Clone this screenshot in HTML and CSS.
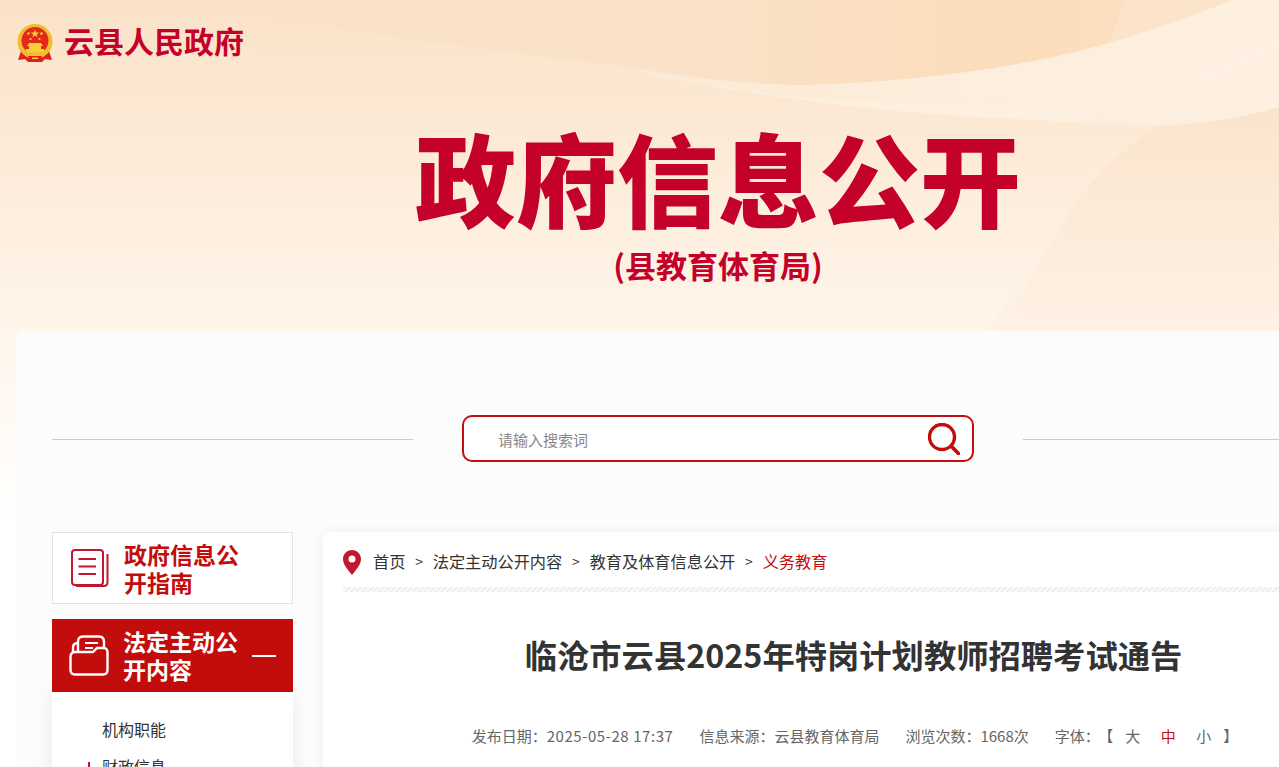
FILE: index.html
```html
<!DOCTYPE html>
<html lang="zh-CN">
<head>
    <meta charset="UTF-8">
    <title>政府信息公开</title>
    <link rel="stylesheet" href="styles.css">
</head>
<body>
    <div class="page">
        <svg class="banner-bg" viewBox="0 0 1436 520" preserveAspectRatio="none">
            <defs>
                <linearGradient id="bg" x1="0" y1="0" x2="0" y2="1">
                    <stop offset="0" stop-color="#fae2c8"/>
                    <stop offset="0.3" stop-color="#fdebd8"/>
                    <stop offset="0.62" stop-color="#fff5ea"/>
                    <stop offset="1" stop-color="#ffffff"/>
                </linearGradient>
                <linearGradient id="swoop" gradientUnits="userSpaceOnUse" x1="190" y1="0" x2="1232" y2="0">
                    <stop offset="0" stop-color="#fae2c8"/>
                    <stop offset="0.45" stop-color="#fae2c8"/>
                    <stop offset="0.78" stop-color="#fbddbb"/>
                    <stop offset="1" stop-color="#fbe0c2"/>
                </linearGradient>
                <linearGradient id="band" gradientUnits="userSpaceOnUse" x1="640" y1="0" x2="1279" y2="0">
                    <stop offset="0" stop-color="#fce9d5"/>
                    <stop offset="0.5" stop-color="#fdeedd"/>
                    <stop offset="1" stop-color="#fdf0e1"/>
                </linearGradient>
                <linearGradient id="facet" gradientUnits="userSpaceOnUse" x1="0" y1="110" x2="0" y2="331">
                    <stop offset="0" stop-color="#fbe4cc"/>
                    <stop offset="1" stop-color="#fef2e5"/>
                </linearGradient>
            </defs>
            <rect width="1436" height="520" fill="url(#bg)"/>
            <path d="M190 0C330 30 480 50 640 68C700 78 750 85 803 85C920 82 1030 66 1109 43C1160 28 1200 13 1232 0Z" fill="url(#swoop)"/>
            <path d="M1109 43L1125 0H1232C1200 13 1160 28 1109 43Z" fill="#fce4cb"/>
            <path d="M640 72C720 90 820 106 925 113C1000 119 1090 124 1154 125C1200 125 1250 116 1279 107L1436 60V0H1232C1200 13 1160 28 1109 43C1030 66 920 82 803 85C750 85 700 78 640 72Z" fill="url(#band)"/>
            <path d="M640 70C760 98 860 104 1000 104C1120 102 1220 70 1279 34V50C1220 88 1110 122 1000 118C860 112 740 92 640 72Z" fill="#fef3e6" fill-opacity="0.35"/>
            <path d="M1154 127L1101 170C1060 220 1020 285 987 331H1436V100L1279 107C1250 116 1200 125 1154 127Z" fill="url(#facet)"/>
            <path d="M1154 127L1101 170C1060 220 1020 285 987 331H1000C1030 280 1060 225 1095 175Z" fill="#fff3e6" fill-opacity="0.6"/>
        </svg>

        <header class="banner">
            <div class="logo">
                <svg class="emblem" viewBox="0 0 36 38">
                    <path d="M4 27L1 36L8 35L11 38H25L28 35L35 36L32 27Z" fill="#d8241c"/>
                    <circle cx="18" cy="17.500" r="17.500" fill="#f2bd2b"/>
                    <circle cx="18" cy="16.500" r="13.500" fill="#e3291c"/>
                    <path d="M18 5.500l1.100 3h3.200l-2.600 1.900 1 3-2.700-1.800-2.700 1.800 1-3-2.600-1.900h3.200z" fill="#f7d038"/>
                    <circle cx="11.500" cy="9.500" r="1.300" fill="#f7d038"/>
                    <circle cx="24.500" cy="9.500" r="1.300" fill="#f7d038"/>
                    <circle cx="13.500" cy="15" r="1.100" fill="#f7d038"/>
                    <circle cx="22.500" cy="15" r="1.100" fill="#f7d038"/>
                    <path d="M12 19h12l2 3h-2v3h3v3H9v-3h3v-3h-2z" fill="#f7d038"/>
                    <path d="M6 28H30L27 32H9Z" fill="#f2bd2b"/>
                    <path d="M11 32H25L23 37H13Z" fill="#d8241c"/>
                    <path d="M15 33.500H21V35H15Z" fill="#f7d038"/>
                </svg>
                <span class="logo-name">云县人民政府</span>
            </div>
            <h1 class="banner-title">政府信息公开</h1>
            <p class="banner-sub">(县教育体育局)</p>
        </header>

        <main class="panel">
            <div class="search-row">
                <span class="search-line"></span>
                <div class="search-box">
                    <span class="search-hint">请输入搜索词</span>
                    <svg class="search-icon" viewBox="0 0 32 32">
                        <circle cx="14" cy="14" r="12.500" fill="none" stroke="#c30d0c" stroke-width="3.400"/>
                        <path d="M23.500 23.500L30.500 30.500" stroke="#c30d0c" stroke-width="3.800" stroke-linecap="round"/>
                    </svg>
                </div>
                <span class="search-line"></span>
            </div>

            <div class="columns">
                <aside class="sidebar">
                    <a class="side-head">
                        <svg class="side-icon" viewBox="0 0 38 38" fill="none" stroke="#c1182e" stroke-width="2">
                            <rect x="1" y="1" width="31" height="35" rx="3"/>
                            <path d="M36.500 5V33C36.500 35.500 35 37 33 37H5"/>
                            <path d="M7.500 10H25M7.500 17.500H25M7.500 25H25"/>
                        </svg>
                        <span>政府信息公开指南</span>
                    </a>
                    <a class="side-head active">
                        <svg class="side-icon" viewBox="0 0 40 41" fill="none" stroke="#fff" stroke-width="2.400">
                            <path d="M9 17V7C9 3 11 1.500 14 1.500H30C33 1.500 35 3 35 7V13"/>
                            <path d="M9 8C5 8 4 10 4 13V17"/>
                            <path d="M1.500 22C1.500 19 3 17 6 17H24L28 13H35C37 13 38.500 15 38.500 17V35C38.500 38 37 39.500 34 39.500H6C3 39.500 1.500 38 1.500 35Z"/>
                            <path d="M16 8H29M16 13H24" stroke-width="2"/>
                        </svg>
                        <span>法定主动公开内容</span>
                        <i class="side-minus"></i>
                    </a>
                    <ul class="side-list">
                        <li>机构职能</li>
                        <li class="open">财政信息</li>
                    </ul>
                </aside>

                <article class="article">
                    <nav class="crumbs">
                        <svg class="pin" viewBox="0 0 18 25">
                            <path fill-rule="evenodd" d="M9 0C4 0 0 4 0 9C0 15 6 21 9 25C12 21 18 15 18 9C18 4 14 0 9 0ZM9 5.500A3.500 3.500 0 1 1 9 12.500A3.500 3.500 0 1 1 9 5.500Z" fill="#c1182e"/>
                        </svg>
                        <a>首页</a><b>&gt;</b>
                        <a>法定主动公开内容</a><b>&gt;</b>
                        <a>教育及体育信息公开</a><b>&gt;</b>
                        <a class="current">义务教育</a>
                    </nav>
                    <h2 class="article-title">临沧市云县2025年特岗计划教师招聘考试通告</h2>
                    <div class="meta">
                        <span>发布日期：<span class="date">2025-05-28 17:37</span></span>
                        <span>信息来源：云县教育体育局</span>
                        <span>浏览次数：1668次</span>
                        <span class="sizes">字体：<em class="open-bracket">【</em><a>大</a><a class="on">中</a><a class="small">小</a><em>】</em></span>
                    </div>
                </article>
            </div>
        </main>
    </div>
</body>
</html>
```

FILE: styles.css
```css
html, body {
    margin: 0;
    height: 100%;
    overflow: hidden;
}
body {
    font-family: "Noto Sans CJK SC", sans-serif;
    background: #fff;
    color: #333;
}
.page {
    position: relative;
    width: 1436px;
}
.banner-bg {
    position: absolute;
    left: 0;
    top: 0;
    width: 1436px;
    height: 520px;
}
.banner {
    position: relative;
    height: 331px;
    text-align: center;
}
.logo {
    display: flex;
    align-items: center;
    gap: 11px;
    padding: 24px 0 0 17px;
    height: 38px;
}
.emblem {
    width: 36px;
    height: 38px;
}
.logo-name {
    position: relative;
    top: -3px;
    font-size: 30px;
    font-weight: 700;
    color: #c4012b;
}
.banner-title {
    margin: 54px 0 0;
    font-size: 101px;
    line-height: 120px;
    font-weight: 900;
    color: #c4012b;
}
.banner-sub {
    margin: 7px 0 0;
    font-size: 31px;
    line-height: 44px;
    font-weight: 700;
    color: #c4012b;
}
.panel {
    position: relative;
    width: 1332px;
    height: 700px;
    margin-left: 16px;
    padding: 84px 36px 0;
    background: #fcfcfc;
    border-radius: 8px 8px 0 0;
}
.search-row {
    display: flex;
    align-items: center;
    justify-content: space-between;
}
.search-line {
    position: relative;
    top: 1px;
    width: 361px;
    height: 1px;
    background: #ccc;
}
.search-box {
    display: flex;
    align-items: center;
    justify-content: space-between;
    box-sizing: border-box;
    width: 512px;
    height: 47px;
    padding: 0 12px 0 34px;
    background: #fff;
    border: 2px solid #c30d0c;
    border-radius: 10px;
}
.search-hint {
    padding-top: 2px;
    font-size: 15px;
    color: #888;
}
.search-icon {
    width: 32px;
    height: 32px;
}
.columns {
    display: flex;
    gap: 30px;
    margin-top: 70px;
}
.sidebar {
    width: 241px;
    flex-shrink: 0;
}
.side-head {
    display: flex;
    align-items: center;
    box-sizing: border-box;
    height: 72px;
    margin-bottom: 15px;
    padding-left: 18px;
    background: #fff;
    border: 1px solid #e3e3e3;
    color: #c30d0c;
    font-size: 23px;
    font-weight: 700;
    line-height: 28px;
}
.side-head span {
    width: 116px;
    margin-left: 15px;
}
.side-icon {
    width: 38px;
    height: 38px;
    flex-shrink: 0;
}
.side-head.active {
    height: 73px;
    margin-bottom: 0;
    padding-left: 17px;
    background: #c30d0c;
    border: 0;
    color: #fff;
}
.side-head.active .side-icon {
    width: 40px;
    height: 41px;
}
.side-head.active span {
    position: relative;
    top: -1px;
    margin-left: 14px;
}
.side-minus {
    width: 24px;
    height: 2px;
    margin-left: 13px;
    background: #fff;
}
.side-list {
    margin: 0;
    padding: 19px 0 0 50px;
    list-style: none;
    background: #fff;
    height: 200px;
    box-shadow: 0 4px 20px rgba(0,0,0,0.08);
    font-size: 16px;
    line-height: 37px;
}
.side-list .open {
    position: relative;
}
.side-list .open::before {
    content: "";
    position: absolute;
    left: -14px;
    top: 14px;
    width: 2px;
    height: 12px;
    background: #c1182e;
}
.side-list .open::after {
    content: "";
    position: absolute;
    left: -19px;
    top: 19px;
    width: 12px;
    height: 2px;
    background: #c1182e;
}
.article {
    flex: 1;
    height: 500px;
    padding: 0 20px;
    background: #fff;
    border-radius: 6px 6px 0 0;
    box-shadow: 0 0 12px rgba(0,0,0,0.06);
}
.crumbs {
    display: flex;
    align-items: center;
    box-sizing: border-box;
    height: 60px;
    padding-bottom: 2px;
    font-size: 16.200px;
    color: #333;
    background: repeating-linear-gradient(135deg, #efefef 0 2px, #fafafa 2px 4px) left bottom / 100% 5px no-repeat;
}
.pin {
    width: 18px;
    height: 25px;
    margin: 2px 12px 0 0;
}
.crumbs b {
    margin: 0 9.800px;
    font-weight: 400;
    font-size: 14px;
}
.crumbs .current {
    color: #c30d0c;
}
.article-title {
    margin: 38px 0 0;
    font-size: 32.300px;
    line-height: 48px;
    font-weight: 700;
    text-align: center;
    color: #333;
}
.meta {
    display: flex;
    justify-content: center;
    gap: 26px;
    margin-top: 46px;
    padding-left: 3px;
    font-size: 15px;
    line-height: 24px;
    color: #666;
}
.date {
    letter-spacing: 0.56px;
}
.sizes em {
    font-style: normal;
}
.sizes .open-bracket {
    margin: 0 2px 0 6px;
}
.sizes a {
    margin: 0 10.500px 0 10px;
}
.sizes .small {
    margin-right: 12px;
}
.sizes .on {
    color: #c30d0c;
}
```
